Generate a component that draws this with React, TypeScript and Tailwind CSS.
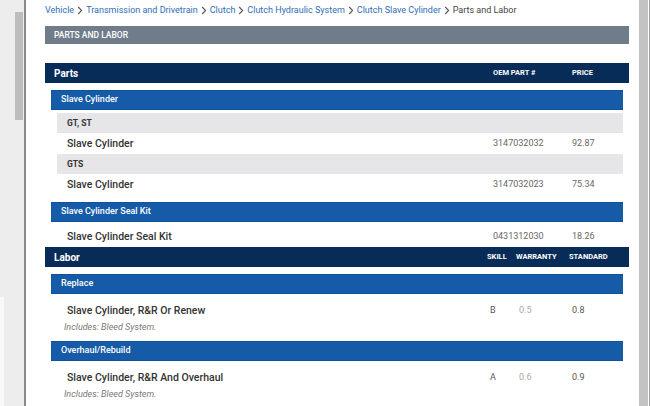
import React from "react";

const crumbs = ["Vehicle", "Transmission and Drivetrain", "Clutch", "Clutch Hydraulic System", "Clutch Slave Cylinder"];

function Chevron() {
  return (
    <svg width="6" height="9" viewBox="0 0 6 9" className="mx-[3px] shrink-0">
      <path d="M1.2 1 L4.6 4.5 L1.2 8" fill="none" stroke="#555" strokeWidth="1.1" />
    </svg>
  );
}

function SectionBar({ title }: { title: string }) {
  return (
    <div className="mt-[7px] flex h-[20px] items-center border-y border-[#10519a] bg-[#155ba7] pl-[10px] text-[9px] font-medium text-white">
      {title}
    </div>
  );
}

function SubGroup({ title, gap }: { title: string; gap?: boolean }) {
  return (
    <div className={`${gap ? "mt-[3px]" : ""} ml-[6px] flex h-[20px] items-center bg-[#e6e6e8] pl-[10px] text-[8.5px] font-bold text-[#333]`}>
      {title}
    </div>
  );
}

function PartRow({ name, part, price, gap }: { name: string; part: string; price: string; gap?: boolean }) {
  return (
    <div className={`${gap ? "mt-[4px]" : ""} flex h-[21px] items-center pl-[16px]`}>
      <span className="flex-1 text-[10.5px] font-medium text-[#333]">{name}</span>
      <span className="w-[79px] text-[9px] text-[#666]">{part}</span>
      <span className="w-[51px] text-[9px] text-[#666]">{price}</span>
    </div>
  );
}

function LaborRow({ name, skill, warranty, standard }: { name: string; skill: string; warranty: string; standard: string }) {
  return (
    <div className="flex h-[40px] flex-col pt-[10px]">
      <div className="flex h-[14px] items-center pl-[16px]">
        <span className="flex-1 text-[10.5px] font-medium text-[#333]">{name}</span>
        <span className="w-[29px] text-[9px] text-[#555]">{skill}</span>
        <span className="w-[53px] text-[9px] text-[#aaa]">{warranty}</span>
        <span className="w-[51px] text-[9px] text-[#555]">{standard}</span>
      </div>
      <div className="mt-[3px] pl-[13px] text-[9px] italic leading-[12px] text-[#777]">Includes: Bleed System.</div>
    </div>
  );
}

export default function App() {
  return (
    <div className="flex h-[406px] w-[650px] overflow-hidden bg-white font-['Roboto',sans-serif]">
      {/* left gutter */}
      <div className="flex w-[24px] shrink-0 flex-col bg-[#ededed]">
        <div className="mt-[12px] ml-[15px] h-[108px] w-[8px] bg-[#bdbdbd]" />
        <div className="flex-1" />
        <div className="h-[109px] w-[4px] bg-[#f8f8f8]" />
      </div>
      <div className="w-[2px] shrink-0 bg-[#8a8a8a]" />

      {/* panel */}
      <main className="flex-1 pl-[19px] pr-[10px]">
        {/* breadcrumb */}
        <div className="flex h-[26px] items-start pt-[4px] text-[9px] leading-[12px]">
          {crumbs.map((c) => (
            <span key={c} className="flex h-[12px] items-center">
              <span className="text-[#2f6db3]">{c}</span>
              <Chevron />
            </span>
          ))}
          <span className="text-[#444]">Parts and Labor</span>
        </div>

        <div className="flex h-[18px] items-center bg-[#707c8a] pl-[9px] text-[8.5px] font-medium text-white">PARTS AND LABOR</div>

        {/* Parts */}
        <div className="mt-[19px] flex h-[20px] items-center bg-[#082c58] pl-[9px] font-bold text-white">
          <span className="flex-1 text-[10px]">Parts</span>
          <span className="w-[79px] text-[7.5px]">OEM PART #</span>
          <span className="w-[57px] text-[7.5px]">PRICE</span>
        </div>

        <div className="px-[6px]">
          <SectionBar title="Slave Cylinder" />
          <SubGroup title="GT, ST" gap />
          <PartRow name="Slave Cylinder" part="3147032032" price="92.87" />
          <SubGroup title="GTS" />
          <PartRow name="Slave Cylinder" part="3147032023" price="75.34" />
          <SectionBar title="Slave Cylinder Seal Kit" />
          <PartRow name="Slave Cylinder Seal Kit" part="0431312030" price="18.26" gap />
        </div>

        {/* Labor */}
        <div className="flex h-[20px] items-center bg-[#082c58] pl-[9px] font-bold text-white">
          <span className="flex-1 text-[10px]">Labor</span>
          <span className="w-[29px] text-[7.5px]">SKILL</span>
          <span className="w-[53px] text-[7.5px]">WARRANTY</span>
          <span className="w-[60px] text-[7.5px]">STANDARD</span>
        </div>

        <div className="px-[6px]">
          <SectionBar title="Replace" />
          <LaborRow name="Slave Cylinder, R&R Or Renew" skill="B" warranty="0.5" standard="0.8" />
          <SectionBar title="Overhaul/Rebuild" />
          <LaborRow name="Slave Cylinder, R&R And Overhaul" skill="A" warranty="0.6" standard="0.9" />
        </div>
      </main>

      {/* right gutter */}
      <div className="flex w-[11px] shrink-0">
        <div className="w-[9px] bg-[#c3c3c3]" />
        <div className="w-[1px] bg-white" />
        <div className="w-[1px] bg-[#a0a0a0]" />
      </div>
    </div>
  );
}
